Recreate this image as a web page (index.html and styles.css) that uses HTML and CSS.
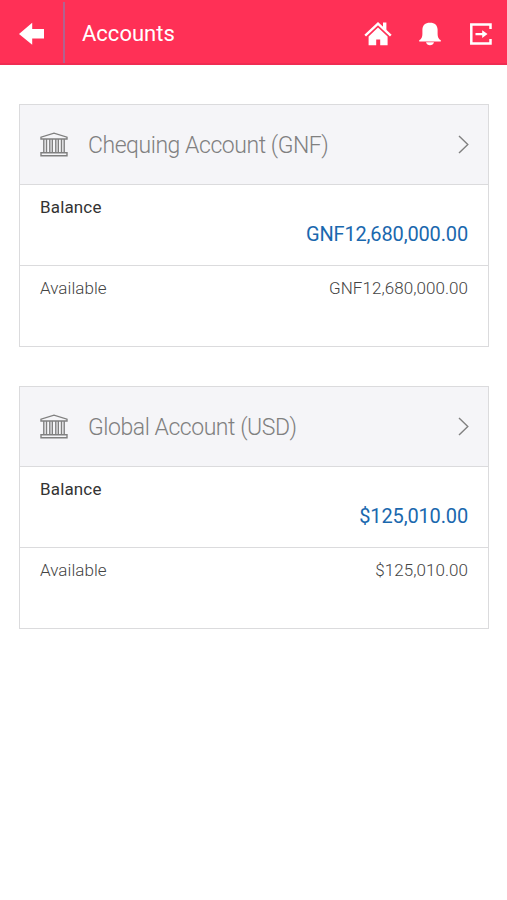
FILE: index.html
```html
<!DOCTYPE html>
<html lang="en">
<head>
  <meta charset="UTF-8">
  <meta name="viewport" content="width=device-width, initial-scale=1.0">
  <title>Accounts</title>
  <link rel="stylesheet" href="styles.css">
</head>
<body>
  <header class="topbar">
    <a class="back" href="#" aria-label="Back">
      <svg width="26" height="24" viewBox="0 0 26 24"><path d="M0 12L13.2 .8V7H25v9.6H13.2v6.2z" fill="#fff"/></svg>
    </a>
    <h1>Accounts</h1>
    <nav class="actions">
      <a href="#" aria-label="Home">
        <svg width="28" height="26" viewBox="0 0 28 26">
          <path d="M1.200 14.600L14 2.600l12.800 12" fill="none" stroke="#fff" stroke-width="2.400"/>
          <path d="M19 1.500h3.400v8L19 6.500z" fill="#fff"/>
          <path d="M14 6.400l9.600 9v8.800H16.200v-5.600h-4v5.600H4.600v-8.800z" fill="#fff"/>
        </svg>
      </a>
      <a href="#" aria-label="Notifications">
        <svg width="24" height="24" viewBox="0 0 24 24">
          <path d="M11 .8C6 .8 3.600 3.400 3.400 7.500v4.500c0 3-.9 5-3.200 6.200v1.300h21.600v-1.300c-2.300-1.200-3.200-3.200-3.200-6.200V7.500C18.400 3.400 16 .8 11 .8z" fill="#fff"/>
          <path d="M7 20.300h8c-.5 1.900-2 2.900-4 2.900s-3.500-1-4-2.900z" fill="#fff"/>
        </svg>
      </a>
      <a href="#" aria-label="Log out">
        <svg width="22" height="22" viewBox="0 0 22 22">
          <path d="M20.500 6v-4.500H1.300v19h19.200V16" fill="none" stroke="#fff" stroke-width="2.500"/>
          <path d="M5.500 9.900h6.700V7.200l5.300 3.900-5.300 3.900v-2.700H5.500z" fill="#fff"/>
        </svg>
      </a>
    </nav>
  </header>

  <main class="accounts">
    <section class="card">
      <a class="card-header" href="#">
        <svg class="bank" width="28" height="26" viewBox="0 0 28 26">
          <path d="M1 7V5.200L14 1.200l13 4V7H1zM3.800 7v13.800M6.500 7v13.800M9.800 7v13.800M12.300 7v13.800M15.800 7v13.800M18.300 7v13.800M21.500 7v13.800M24.200 7v13.800M1 20.800h26v2.900H1z"/>
        </svg>
        <h2>Chequing Account (GNF)</h2>
        <svg class="chevron" width="11" height="19" viewBox="0 0 11 19"><path d="M1 1l8.800 8.500L1 18"/></svg>
      </a>
      <div class="balance">
        <span class="label">Balance</span>
        <span class="amount">GNF12,680,000.00</span>
      </div>
      <div class="available">
        <span>Available</span>
        <span>GNF12,680,000.00</span>
      </div>
    </section>

    <section class="card">
      <a class="card-header" href="#">
        <svg class="bank" width="28" height="26" viewBox="0 0 28 26">
          <path d="M1 7V5.200L14 1.200l13 4V7H1zM3.800 7v13.800M6.500 7v13.800M9.800 7v13.800M12.300 7v13.800M15.800 7v13.800M18.300 7v13.800M21.500 7v13.800M24.200 7v13.800M1 20.800h26v2.900H1z"/>
        </svg>
        <h2>Global Account (USD)</h2>
        <svg class="chevron" width="11" height="19" viewBox="0 0 11 19"><path d="M1 1l8.800 8.500L1 18"/></svg>
      </a>
      <div class="balance">
        <span class="label">Balance</span>
        <span class="amount">$125,010.00</span>
      </div>
      <div class="available">
        <span>Available</span>
        <span>$125,010.00</span>
      </div>
    </section>
  </main>
</body>
</html>
```
FILE: styles.css
```css
* {
  box-sizing: border-box;
}
body {
  margin: 0;
  background: #fff;
  font-family: Roboto, sans-serif;
}
a {
  color: inherit;
  text-decoration: none;
}
svg {
  display: block;
}
h1, h2 {
  margin: 0;
}
.topbar {
  display: flex;
  align-items: center;
  height: 65px;
  padding-right: 15px;
  background: #ff3056;
  border-bottom: 2px solid #f02c52;
  color: #fff;
}
.back {
  display: flex;
  align-items: center;
  align-self: flex-end;
  width: 65px;
  height: 61px;
  padding: 2px 0 0 19px;
  border-right: 2px solid #b3618f;
}
.topbar h1 {
  flex: 1;
  padding: 4px 0 0 17px;
  font-size: 22px;
  font-weight: 400;
}
.actions {
  display: flex;
  align-items: center;
  gap: 27px;
  padding-top: 5px;
}
.accounts {
  display: flex;
  flex-direction: column;
  gap: 39px;
  padding: 39px 18px 0 19px;
}
.card {
  border: 1px solid #dbdbdd;
}
.card-header {
  display: flex;
  align-items: center;
  height: 80px;
  padding: 0 19px 0 20px;
  background: #f5f5f8;
  border-bottom: 1px solid #dbdbdd;
}
.card-header h2 {
  flex: 1;
  padding: 1px 0 0 20px;
  font-size: 23px;
  font-weight: 300;
  letter-spacing: -0.45px;
  color: #808080;
}
.bank, .chevron {
  fill: none;
  stroke: #808080;
  stroke-width: 1.4;
}
.balance {
  display: flex;
  flex-direction: column;
  height: 81px;
  padding: 12px 20px 0;
  border-bottom: 1px solid #dbdbdd;
}
.label {
  font-size: 17px;
  line-height: 20px;
  letter-spacing: 0.15px;
  color: #333;
}
.amount {
  align-self: flex-end;
  margin-top: 5px;
  font-size: 20px;
  line-height: 24px;
  letter-spacing: -0.15px;
  color: #1a68ae;
}
.available {
  display: flex;
  justify-content: space-between;
  height: 80px;
  padding: 12px 20px 0;
  font-size: 17px;
  font-weight: 300;
  line-height: 20px;
  letter-spacing: 0.05px;
  color: #444;
}
```
